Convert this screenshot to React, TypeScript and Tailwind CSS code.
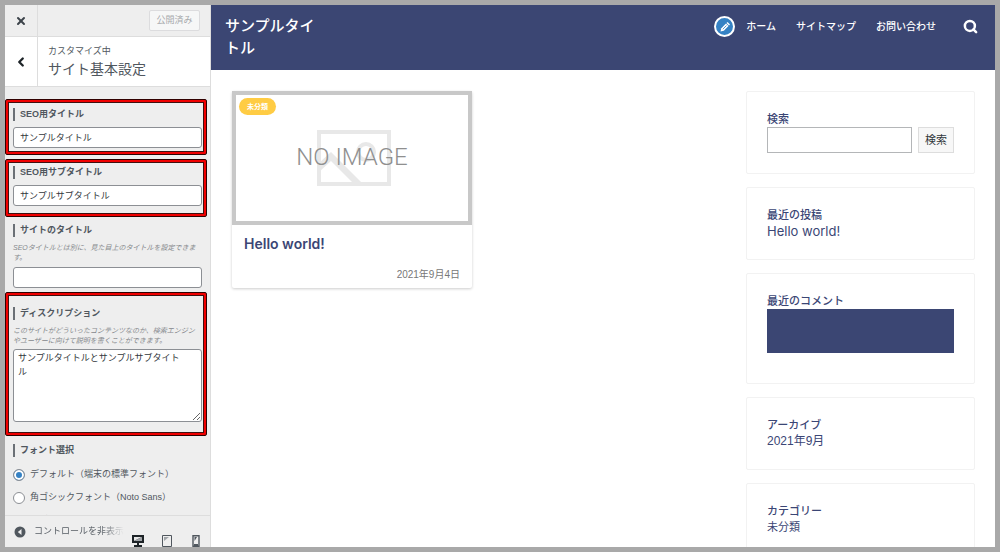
import React, { useState } from 'react';
import { ChevronLeft, Search, X } from 'lucide-react';

const NAV_LINKS = ['ホーム', 'サイトマップ', 'お問い合わせ'];

const FONTS = [
  'デフォルト（端末の標準フォント）',
  '角ゴシックフォント（Noto Sans）',
  '丸ゴシックフォント（M PLUS）',
];

const INPUT_CLASS =
  'block w-full h-[21px] px-1.5 text-[9px] text-[#32373c] bg-white border border-[#8c8f94] rounded-[3px] outline-none';

interface SectionProps {
  id: string;
  label: string;
  note?: string;
  highlighted?: boolean;
  className?: string;
  children: React.ReactNode;
}

const Section: React.FC<SectionProps> = ({ id, label, note, highlighted, className, children }) => (
  <div
    className={`mr-[3px] pl-[7px] pr-1 border rounded-[2px] ${
      highlighted
        ? 'border-[#300000] shadow-[inset_0_0_0_2px_#f00000,inset_0_0_0_3px_#401010]'
        : 'border-transparent'
    } ${className}`}
  >
    <label
      htmlFor={id}
      className="block border-l-2 border-[#6b7076] pl-[5px] text-[9px] leading-[13px] font-bold text-[#50575e]"
    >
      {label}
    </label>
    {note && <p className="mt-1.5 pr-1 text-[7px] leading-[10px] italic text-[#85888c]">{note}</p>}
    {children}
  </div>
);

const Customizer: React.FC = () => {
  const [title, setTitle] = useState('サンプルタイトル');
  const [subtitle, setSubtitle] = useState('サンプルサブタイトル');
  const [siteTitle, setSiteTitle] = useState('');
  const [description, setDescription] = useState('サンプルタイトルとサンプルサブタイトル');
  const [font, setFont] = useState(0);

  return (
    <aside className="w-[206px] shrink-0 flex flex-col bg-[#eeeeee] border-r border-[#dddddd] text-[#50575e]">
      <div className="h-8 shrink-0 flex items-center justify-between border-b border-[#dddddd]">
        <button aria-label="閉じる" className="w-[33px] h-full flex items-center justify-center border-r border-[#dddddd]">
          <X className="w-3 h-3 text-[#3c434a]" strokeWidth={4} />
        </button>
        <button
          disabled
          className="mr-2.5 w-[51px] h-[21px] border border-[#dcdcde] rounded-[2px] bg-[#f6f7f7] text-[9px] text-[#a7aaad]"
        >
          公開済み
        </button>
      </div>

      <div className="h-[50px] shrink-0 flex bg-white border-b border-[#dddddd]">
        <button aria-label="戻る" className="w-[33px] flex items-center justify-center border-r border-[#dddddd]">
          <ChevronLeft className="w-3.5 h-3.5 text-[#1d2327]" strokeWidth={4} />
        </button>
        <div className="pl-2.5 pt-2">
          <p className="text-[9px] leading-[13px]">カスタマイズ中</p>
          <h2 className="text-[14px] leading-[22px]">サイト基本設定</h2>
        </div>
      </div>

      <div className="flex-1 min-h-0 overflow-hidden pt-3">
        <Section id="seo-title" label="SEO用タイトル" highlighted className="pt-2 pb-1.5">
          <input
            id="seo-title"
            className={`${INPUT_CLASS} mt-1.5`}
            value={title}
            onChange={(e) => setTitle(e.target.value)}
          />
        </Section>
        <Section id="seo-subtitle" label="SEO用サブタイトル" highlighted className="mt-1 pt-1.5 pb-2.5">
          <input
            id="seo-subtitle"
            className={`${INPUT_CLASS} mt-1.5`}
            value={subtitle}
            onChange={(e) => setSubtitle(e.target.value)}
          />
        </Section>
        <Section
          id="site-title"
          label="サイトのタイトル"
          note="SEOタイトルとは別に、見た目上のタイトルを設定できます。"
          className="pt-1.5 pb-[3px]"
        >
          <input
            id="site-title"
            className={`${INPUT_CLASS} mt-1`}
            value={siteTitle}
            onChange={(e) => setSiteTitle(e.target.value)}
          />
        </Section>
        <Section
          id="description"
          label="ディスクリプション"
          note="このサイトがどういったコンテンツなのか、検索エンジンやユーザーに向けて説明を書くことができます。"
          highlighted
          className="pt-3.5 pb-[13px]"
        >
          <textarea
            id="description"
            className="block w-full h-[73px] mt-[3px] pl-1 pr-5 py-px text-[9px] leading-[14px] text-[#32373c] bg-white border border-[#8c8f94] rounded-[3px] outline-none resize-y"
            value={description}
            onChange={(e) => setDescription(e.target.value)}
          />
        </Section>
        <Section id="font-0" label="フォント選択" className="pt-[7px]">
          <div className="mt-1.5">
            {FONTS.map((name, i) => (
              <div key={name} className="h-[23px] flex items-center">
                <input
                  type="radio"
                  id={`font-${i}`}
                  name="font"
                  checked={font === i}
                  onChange={() => setFont(i)}
                  className="appearance-none w-3 h-3 shrink-0 rounded-full bg-white border border-[#8c8f94] checked:bg-[#3582c4] checked:shadow-[inset_0_0_0_2px_#ffffff]"
                />
                <label htmlFor={`font-${i}`} className="ml-[5px] text-[9px] whitespace-nowrap">
                  {name}
                </label>
              </div>
            ))}
          </div>
        </Section>
      </div>

      <div className="h-8 shrink-0 flex items-start justify-between overflow-hidden border-t border-[#dddddd]">
        <button className="h-8 pl-[9px] flex items-center gap-2">
          <svg viewBox="0 0 12 12" className="w-3 h-3">
            <circle cx="6" cy="6" r="5.5" fill="#50575e" />
            <path d="M7.5 3v6L3.8 6z" fill="#eeeeee" />
          </svg>
          <span className="text-[9px] bg-linear-to-r from-[#50575e] from-75% to-[#eeeeee] bg-clip-text text-transparent">
            コントロールを非表示
          </span>
        </button>
        <div className="flex gap-[17px] pt-[19px] pr-2">
          <button aria-label="デスクトップ">
            <svg viewBox="0 0 12 13" className="w-3 h-[13px]">
              <path d="M0 0h12v8H7v2h3v2H2v-2h3V8H0z" fill="#1d2327" />
              <path d="M2 2h8L2 6z" fill="#e6e6e6" />
              <path d="M10 2v4H2z" fill="#a0a4a8" />
            </svg>
          </button>
          <button aria-label="タブレット">
            <svg viewBox="0 0 12 13" className="w-3 h-[13px]">
              <path d="M1.5 .5h9v11h-9z" fill="#eeeeee" stroke="#50575e" />
              <path d="M3 2h5L3 6z" fill="#a0a4a8" />
            </svg>
          </button>
          <button aria-label="モバイル">
            <svg viewBox="0 0 12 13" className="w-3 h-[13px]">
              <path d="M3 .7h6v10.6H3z" fill="#eeeeee" stroke="#50575e" strokeWidth="1.4" />
              <path d="M4.5 2H7L4.5 6zM4 9h4v2H4z" fill="#50575e" />
            </svg>
          </button>
        </div>
      </div>
    </aside>
  );
};

const NoImage: React.FC = () => (
  <svg viewBox="0 0 232 126" className="block w-full" role="img" aria-label="NO IMAGE">
    <g fill="none" stroke="#e8e8e8" strokeWidth="4">
      <path d="M83 37h70v52H83z" />
      <circle cx="130" cy="57" r="8" />
    </g>
    <path d="M83 68l12-11 32 32h-9L95 66 83 77z" fill="#e8e8e8" />
    <text
      x="116"
      y="70"
      textAnchor="middle"
      fontSize="24"
      fontWeight="300"
      fontFamily="Roboto, sans-serif"
      fill="#8f8f8f"
    >
      NO IMAGE
    </text>
  </svg>
);

const Widget: React.FC<{ title: string; className?: string; children: React.ReactNode }> = ({
  title,
  className = 'pb-5',
  children,
}) => (
  <section className={`border border-[#f2f2f2] rounded-[2px] px-5 pt-[19px] text-[11px] leading-4 ${className}`}>
    <h3 className="font-medium">{title}</h3>
    {children}
  </section>
);

const Preview: React.FC = () => (
  <div className="flex-1 min-w-0 flex flex-col overflow-hidden bg-white text-[#3b4675]">
    <header className="h-[65px] shrink-0 flex items-start justify-between bg-[#3b4673] pl-3.5 pr-[17px] text-white">
      <a href="#" className="w-[92px] pt-2.5 text-[15px] leading-[22px] font-medium">
        サンプルタイトル
      </a>
      <div className="flex items-center pt-[11px]">
        <button
          aria-label="編集"
          className="w-[21px] h-[21px] mr-[11px] flex items-center justify-center rounded-full border-2 border-white bg-[#3582c4]"
        >
          <svg viewBox="0 0 12 12" className="w-3 h-3">
            <path d="M1.5 10.5l.8-3.3L7 2.5 9.5 5 4.8 9.7z" fill="#ffffff" />
            <path d="M7.5 2l1-1L11 3.5l-1 1z" fill="#ffffff" />
            <path d="M3.8 8.2l3.7-3.7" stroke="#3582c4" strokeWidth=".8" />
          </svg>
        </button>
        <nav className="flex gap-5 text-[10px] font-medium">
          {NAV_LINKS.map((name) => (
            <a key={name} href="#">
              {name}
            </a>
          ))}
        </nav>
        <button aria-label="検索" className="ml-[27px]">
          <Search className="w-[15px] h-[15px]" strokeWidth={4} />
        </button>
      </div>
    </header>

    <div className="flex-1 min-h-0 flex items-start justify-between pt-[21px] pl-[21px] pr-5">
      <article className="w-60 rounded-[2px] shadow-[0_1px_3px_rgba(0,0,0,0.2)]">
        <div className="relative border-4 border-[#c8c8c8]">
          <NoImage />
          <a
            href="#"
            className="absolute left-[3px] top-[3px] px-2 rounded-full bg-[#ffcc44] text-white text-[7px] leading-[17px] font-bold"
          >
            未分類
          </a>
        </div>
        <div className="px-3 pt-2.5 pb-[7px]">
          <h2 className="text-[14px] leading-[18px] font-semibold font-[Inter]">
            <a href="#">Hello world!</a>
          </h2>
          <p className="mt-4 text-right text-[10px] leading-3 text-[#777777]">2021年9月4日</p>
        </div>
      </article>

      <aside className="w-[229px] flex flex-col gap-[13px]">
        <section className="border border-[#f2f2f2] rounded-[2px] px-5 pt-[19px] pb-5 text-[11px] leading-4">
          <label htmlFor="search" className="block font-medium">
            検索
          </label>
          <div className="flex gap-1.5">
            <input
              id="search"
              type="search"
              className="flex-1 min-w-0 h-[26px] px-1 border border-[#b4b6b8] outline-none"
            />
            <button className="w-9 h-[26px] bg-[#f7f7f7] border border-[#dddddd] text-[#32373c]">検索</button>
          </div>
        </section>
        <Widget title="最近の投稿">
          <a href="#" className="block text-[13px] leading-4 font-[Inter]">
            Hello world!
          </a>
        </Widget>
        <Widget title="最近のコメント" className="pb-[30px]">
          <div className="h-11 bg-[#3b4673]" />
        </Widget>
        <Widget title="アーカイブ">
          <a href="#" className="block text-[12px] leading-4">
            2021年9月
          </a>
        </Widget>
        <Widget title="カテゴリー">
          <a href="#" className="block">
            未分類
          </a>
        </Widget>
      </aside>
    </div>
  </div>
);

const App: React.FC = () => {
  return (
    <div className="h-screen flex overflow-hidden border-[5px] border-[#a9a9a9] font-['Liberation_Sans','Noto_Sans_CJK_JP',sans-serif]">
      <Customizer />
      <Preview />
    </div>
  );
};

export default App;
